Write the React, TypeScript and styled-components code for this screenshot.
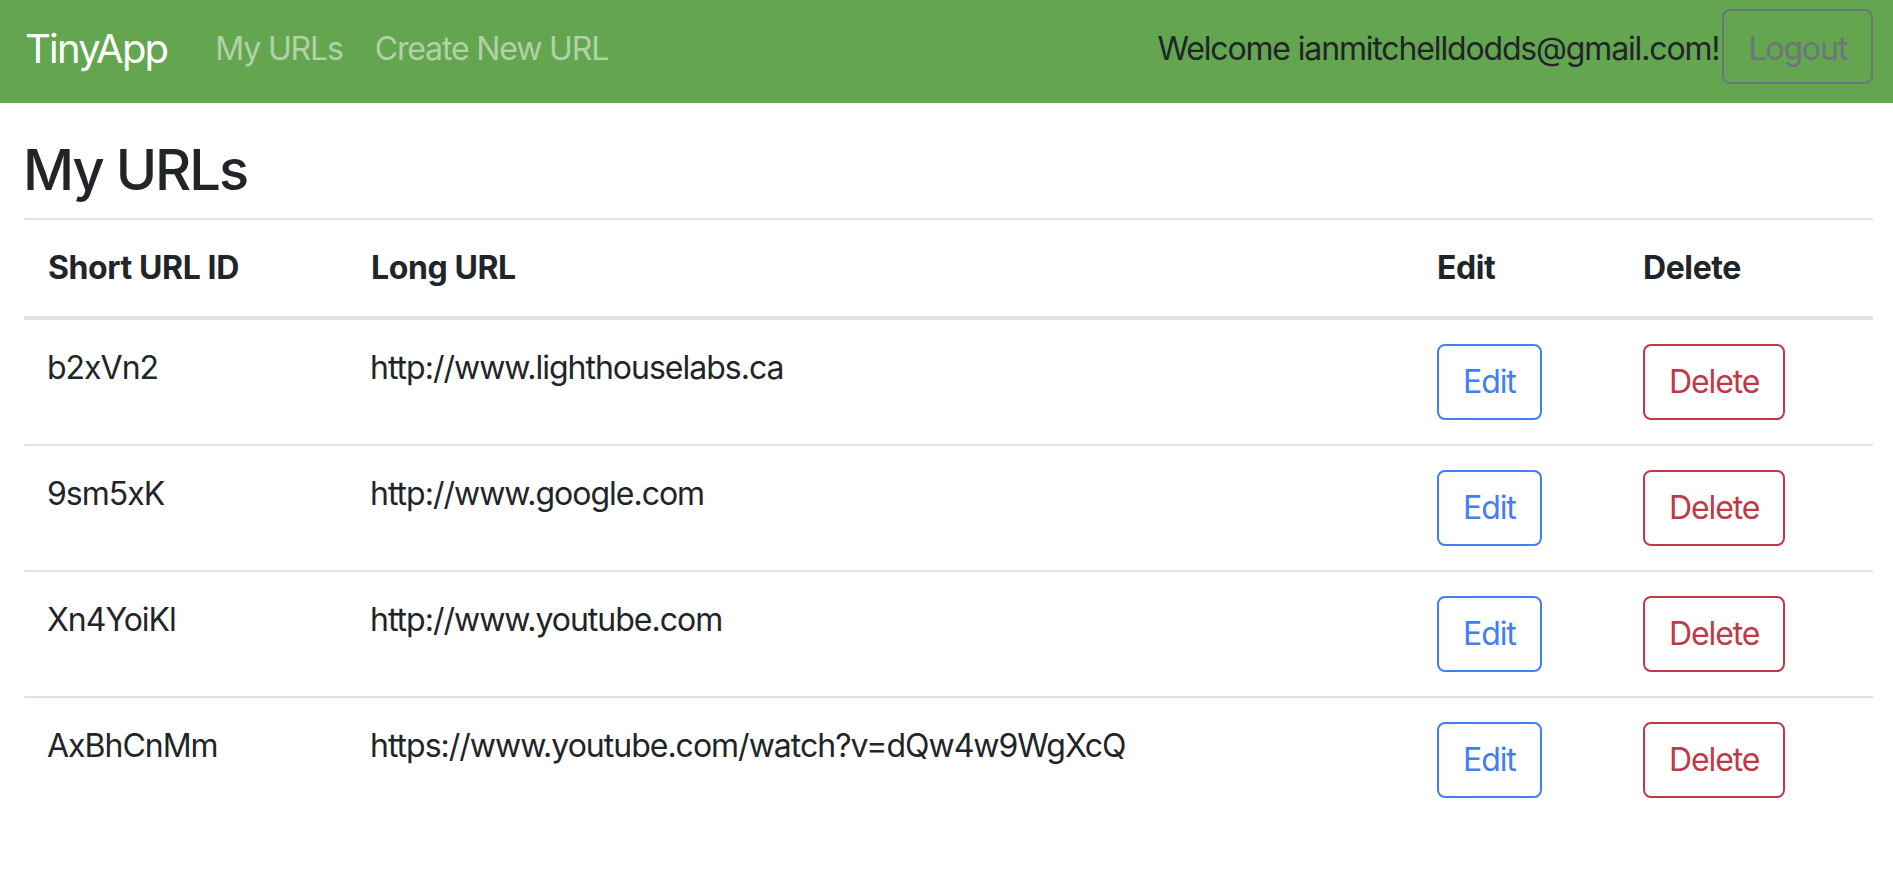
import React from "react";
import styled, { createGlobalStyle } from "styled-components";

const GlobalStyle = createGlobalStyle`
  html, body {
    margin: 0;
    padding: 0;
    background: #ffffff;
    font-family: Inter, "Noto Sans", "Liberation Sans", sans-serif;
    color: #212529;
  }
  * { box-sizing: border-box; }
`;

const NavBar = styled.nav`
  display: flex;
  align-items: center;
  height: 103px;
  padding: 9px 20px 19px 25px;
  background: #63a64f;
`;

const Brand = styled.a`
  font-size: 40px;
  line-height: 60px;
  padding-top: 5px;
  color: #ffffff;
  text-decoration: none;
  margin-right: 32px;
  letter-spacing: -1.8px;
`;

const NavLinks = styled.div`
  display: flex;
  align-items: center;
  flex: 1;
`;

const NavLink = styled.a`
  font-size: 32px;
  line-height: 48px;
  padding: 5px 16px 0;
  color: rgba(255, 255, 255, 0.5);
  text-decoration: none;
  letter-spacing: -1.15px;
`;

const Welcome = styled.span`
  font-size: 32px;
  line-height: 48px;
  padding-top: 5px;
  color: #212529;
  margin-right: 3px;
  letter-spacing: -1.15px;
`;

const OutlineButton = styled.button<{ $tone: string }>`
  font-family: inherit;
  font-size: 32px;
  line-height: 48px;
  padding: 12px 24px;
  border: 2px solid ${(p) => p.$tone};
  border-radius: 8px;
  color: ${(p) => p.$tone};
  background: transparent;
  cursor: pointer;
  letter-spacing: -1.1px;
`;

const LogoutButton = styled(OutlineButton)`
  line-height: 47px;
  padding: 14px 24px 10px;
  letter-spacing: -1.15px;
`;

const Main = styled.main`
  padding: 0 20px 0 24px;
`;

const Heading = styled.h3`
  font-size: 56px;
  font-weight: 500;
  line-height: 67px;
  margin: 34px 0 14px -1px;
  letter-spacing: -2px;
`;

const Table = styled.table`
  width: 100%;
  border-collapse: collapse;
  table-layout: fixed;
`;

const HeadCell = styled.th<{ $w: number }>`
  width: ${(p) => p.$w}px;
  text-align: left;
  font-size: 32px;
  line-height: 48px;
  font-weight: 700;
  padding: 24px 24px;
  border-top: 2px solid #dee2e6;
  border-bottom: 4px solid #dee2e6;
  letter-spacing: -0.4px;
`;

const Cell = styled.td`
  font-size: 32px;
  line-height: 48px;
  padding: 24px 24px 24px 23px;
  vertical-align: top;
  border-top: 2px solid #dee2e6;
  letter-spacing: -1px;
`;

const ButtonCell = styled(Cell)`
  padding-left: 24px;
`;

const urls = [
  { id: "b2xVn2", long: "http://www.lighthouselabs.ca" },
  { id: "9sm5xK", long: "http://www.google.com" },
  { id: "Xn4YoiKl", long: "http://www.youtube.com" },
  { id: "AxBhCnMm", long: "https://www.youtube.com/watch?v=dQw4w9WgXcQ" },
];

export default function App() {
  return (
    <>
      <GlobalStyle />
      <NavBar>
        <Brand href="#">TinyApp</Brand>
        <NavLinks>
          <NavLink href="#">My URLs</NavLink>
          <NavLink href="#">Create New URL</NavLink>
        </NavLinks>
        <Welcome>Welcome ianmitchelldodds@gmail.com!</Welcome>
        <LogoutButton $tone="#6c757d">Logout</LogoutButton>
      </NavBar>
      <Main>
        <Heading>My URLs</Heading>
        <Table>
          <thead>
            <tr>
              <HeadCell $w={323}>Short URL ID</HeadCell>
              <HeadCell $w={1066}>Long URL</HeadCell>
              <HeadCell $w={206}>Edit</HeadCell>
              <HeadCell $w={254}>Delete</HeadCell>
            </tr>
          </thead>
          <tbody>
            {urls.map((u) => (
              <tr key={u.id}>
                <Cell>{u.id}</Cell>
                <Cell>{u.long}</Cell>
                <ButtonCell>
                  <OutlineButton $tone="#427ff5">Edit</OutlineButton>
                </ButtonCell>
                <ButtonCell>
                  <OutlineButton $tone="#c03946">Delete</OutlineButton>
                </ButtonCell>
              </tr>
            ))}
          </tbody>
        </Table>
      </Main>
    </>
  );
}
